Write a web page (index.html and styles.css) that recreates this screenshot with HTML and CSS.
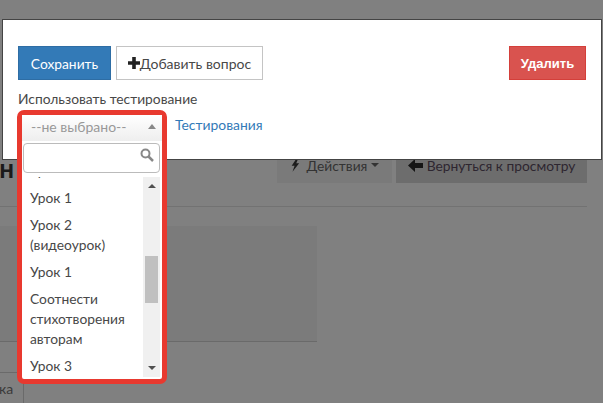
FILE: index.html
```html
<!DOCTYPE html>
<html lang="ru">
<head>
<meta charset="utf-8">
<title>Тестирование</title>
<link rel="stylesheet" href="styles.css">
</head>
<body>
<div class="page">
  <div class="head">
    <h1 class="title">ан</h1>
    <div class="actions">
      <span class="bg-btn bg-act"><svg class="bolt" viewBox="0 0 12 16"><path d="M8 0 2 9h3.5L3 16l8-10H7.5L10 0z"/></svg><span class="act-text">Действия</span><i class="caret"></i></span>
      <span class="bg-btn bg-back"><svg class="back" viewBox="0 0 15 13"><path d="M7 0 0 6.5 7 13V9h8V4H7z"/></svg>Вернуться к просмотру</span>
    </div>
  </div>
  <div class="rule"></div>
  <div class="panel"></div>
  <div class="tabs"><span class="tab">ка</span></div>
</div>

<div class="modal">
  <div class="toolbar">
    <button class="btn btn-save">Сохранить</button>
    <button class="btn btn-add"><svg class="plus" viewBox="0 0 12 12"><path d="M4.2 0h3.6v4.200H12v3.600H7.800V12H4.200V7.800H0V4.200h4.200z"/></svg>Добавить вопрос</button>
    <button class="btn btn-del">Удалить</button>
  </div>
  <div class="label">Использовать тестирование</div>
  <a class="link" href="#">Тестирования</a>
</div>

<div class="dropdown">
  <div class="select"><span>--не выбрано--</span><i class="up-small"></i></div>
  <div class="search">
    <svg class="loupe" viewBox="0 0 14 14"><circle cx="5.500" cy="5.500" r="4" fill="none" stroke="#888" stroke-width="2"/><path d="M8.500 8.500 13 13" stroke="#888" stroke-width="2.500"/></svg>
  </div>
  <div class="listbox">
    <ul class="items">
      <li>Урок</li>
      <li>Урок 1</li>
      <li>Урок 2 (видеоурок)</li>
      <li>Урок 1</li>
      <li>Соотнести стихотворения авторам</li>
      <li>Урок 3</li>
    </ul>
    <div class="scrollbar">
      <i class="arrow-up"></i>
      <div class="thumb"></div>
      <i class="arrow-down"></i>
    </div>
  </div>
</div>
</body>
</html>
```

FILE: styles.css
```css
* { box-sizing: border-box; }
html, body { margin: 0; height: 403px; overflow: hidden; }
body { background: #808080; font-family: Lato, "Open Sans", sans-serif; font-size: 14px; color: #484848; position: relative; }

.page { padding-top: 150px; height: 403px; }
.head { display: flex; justify-content: space-between; padding-right: 16px; height: 33px; }
.title { margin: 0 0 0 -14px; font: bold 26px/36px Lato, sans-serif; color: #1a1a1a; }
.actions { display: flex; gap: 4px; }
.bg-btn { display: flex; align-items: center; justify-content: center; gap: 4px; height: 33px; padding-bottom: 3px; font-size: 13.800px; color: #333; }
.bg-act { width: 115px; background: #7a7a7a; }
.act-text { margin-left: 3px; }
.bg-back { width: 191px; background: #6d6d6d; color: #2d2630; }
.bolt { width: 10px; height: 14px; fill: #1c1c1c; }
.back { width: 15px; height: 13px; fill: #151515; }
.caret { border: 4px solid transparent; border-top-color: #333; border-bottom: 0; }
.rule { margin: 23px 16px 0 0; border-top: 1px solid #727272; }
.panel { margin-top: 19px; width: 317px; height: 116px; background: #7b7b7b; border-bottom: 1px solid #6a6a6a; }
.tabs { margin-top: 30px; border-top: 1px solid #6a6a6a; width: 24px; height: 40px; border-right: 1px solid #6a6a6a; line-height: 31px; color: #3a3a3a; }
.tab { display: block; margin-left: -1px; }

.modal { position: absolute; left: 2px; top: 19px; width: 600px; height: 141px; background: #fff; border: 1px solid #444; padding: 26px 15px 0; }
.toolbar { display: flex; gap: 5px; }
.btn { height: 34px; border: 1px solid; padding: 0; font-size: 13.800px; border-radius: 0; }
.btn-save { width: 93px; background: #337ab7; border-color: #2e6da4; color: #fff; font-family: Lato, sans-serif; }
.btn-add { width: 147px; background: #fff; border-color: #c4c4c4; color: #484848; display: flex; align-items: center; justify-content: center; font-family: Lato, sans-serif; font-size: 14px; }
.plus { width: 12px; height: 12px; fill: #222; }
.btn-del { width: 77px; margin-left: auto; background: #d9534f; border-color: #d43f3a; color: #fff; font-family: "Liberation Sans", sans-serif; font-size: 13px; font-weight: bold; }
.label { margin-top: 9px; line-height: 20px; font-size: 13.800px; }
.link { position: absolute; left: 172px; top: 95px; line-height: 20px; font-size: 13.900px; color: #337ab7; text-decoration: none; }

.dropdown { position: absolute; left: 17px; top: 110px; width: 150px; height: 274px; background: #fff; border: 5px solid #e8392f; border-radius: 7px; }
.select { height: 26px; padding-left: 9px; padding-right: 6px; background: linear-gradient(#fff, #eee); color: #999; line-height: 22px; display: flex; justify-content: space-between; align-items: center; }
.select span { margin-top: -2px; }
.up-small { border: 4px solid transparent; border-bottom: 5px solid #888; border-top: 0; margin-top: -3px; }
.search { margin: 2px 0 0 1px; width: 137px; height: 30px; border: 1px solid #bbb; border-radius: 4px; position: relative; background: #fff; }
.loupe { position: absolute; right: 5px; top: 4px; width: 14px; height: 14px; }
.listbox { position: relative; margin-top: 4px; height: 200px; overflow: hidden; }
.items { list-style: none; margin: -20px 17px 0 0; padding: 0; font-size: 13.800px; }
.items li { padding: 3.500px 8px; line-height: 20px; }
.scrollbar { position: absolute; left: 121px; top: 0; width: 17px; height: 200px; background: #f0f0f0; }
.thumb { position: absolute; left: 2px; top: 79px; width: 13px; height: 47px; background: #c0c0c0; }
.arrow-up, .arrow-down { position: absolute; left: 5px; border: 4px solid transparent; }
.arrow-up { top: 7px; border-top: 0; border-bottom: 4px solid #505050; }
.arrow-down { bottom: 7px; border-bottom: 0; border-top: 4px solid #505050; }
```
